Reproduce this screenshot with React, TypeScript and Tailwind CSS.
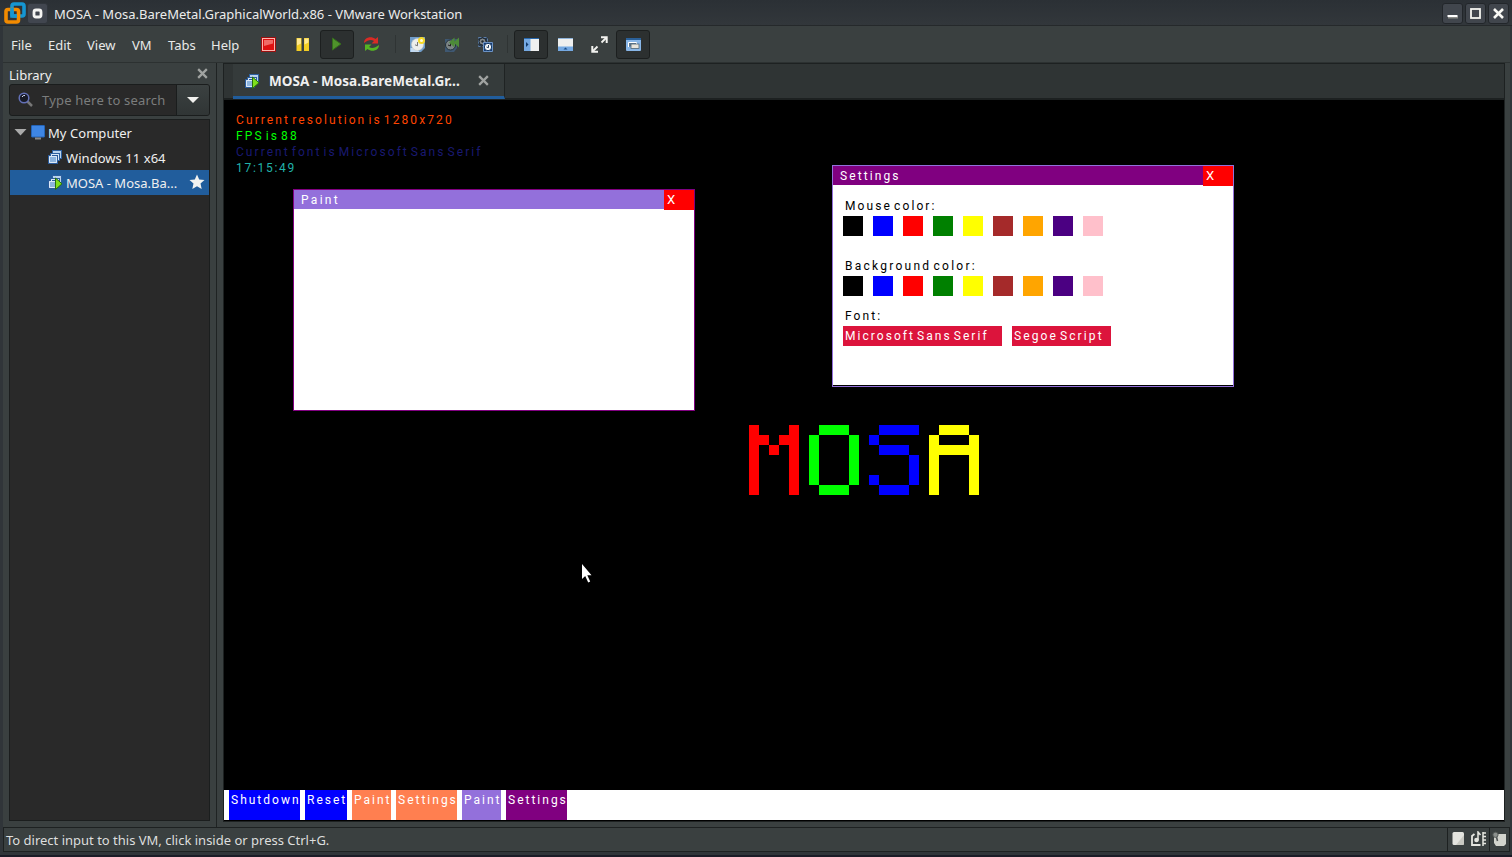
import type { ReactNode } from 'react';

const px = "whitespace-pre font-['Roboto',sans-serif] font-normal text-[12px] leading-[16px]";

const COLORS = [
  'bg-black',
  'bg-[#0000ff]',
  'bg-[#ff0000]',
  'bg-[#008000]',
  'bg-[#ffff00]',
  'bg-[#a52a2a]',
  'bg-[#ffa500]',
  'bg-[#4b0082]',
  'bg-[#ffc0cb]',
];

const TASKS = [
  { label: 'Shutdown', cls: 'w-[71px] mr-[5px] bg-[#0000ff] tracking-[2px]' },
  { label: 'Reset', cls: 'w-[42px] mr-[5px] bg-[#0000ff] tracking-[2px]' },
  { label: 'Paint', cls: 'w-[39px] mr-[5px] bg-[#ff7f50] tracking-[2px]' },
  { label: 'Settings', cls: 'w-[61px] mr-[5px] bg-[#ff7f50] tracking-[2px]' },
  { label: 'Paint', cls: 'w-[39px] mr-[5px] bg-[#9370db] tracking-[2px]' },
  { label: 'Settings', cls: 'w-[61px] bg-[#800080] tracking-[2px]' },
];

const LETTERS = [
  { fill: '#ff0000', rows: ['10001', '11011', '10101', '10001', '10001', '10001', '10001'] },
  { fill: '#00ff00', rows: ['01110', '10001', '10001', '10001', '10001', '10001', '01110'] },
  { fill: '#0000ff', rows: ['01111', '10000', '01110', '00001', '00001', '10001', '01110'] },
  { fill: '#ffff00', rows: ['01110', '10001', '11111', '10001', '10001', '10001', '10001'] },
];

function MachineIcon({ running = false }: { running?: boolean }) {
  return (
    <svg width="15" height="15" viewBox="0 0 15 15" className="shrink-0">
      <rect x="4.500" y=".5" width="9" height="8" fill="#b9d3ee" stroke="#2d5f9e" />
      <rect x="2.500" y="3.500" width="9" height="7" fill="#a3c3e6" stroke="#2d5f9e" />
      <rect x=".5" y="5.500" width="9" height="8" fill="#8db4de" stroke="#2a5b9b" />
      <path d="M3.500 6V4.500h7V10M1.500 12.500v-6h7v6z" stroke="#dce9f7" fill="none" />
      {running && <path d="M7.500 3v11.500L14 8.800z" fill="#7ee01c" stroke="#276c0d" />}
    </svg>
  );
}

function CloseIcon({ size = 12 }: { size?: number }) {
  return (
    <svg width={size} height={size} viewBox="0 0 12 12" className="shrink-0">
      <path d="M2 2l8 8M10 2l-8 8" stroke="#a0a3a1" strokeWidth="2.1" />
    </svg>
  );
}

function ToolButton({ active = false, children }: { active?: boolean; children: ReactNode }) {
  return (
    <div
      className={
        active
          ? 'flex h-[29px] w-[34px] shrink-0 items-center justify-center rounded-[3px] border border-[#1c1f1f] bg-[#2c3030]'
          : 'flex h-[29px] w-[34px] shrink-0 items-center justify-center'
      }
    >
      {children}
    </div>
  );
}

function TitleBar() {
  const button = 'flex h-[21px] w-[21px] items-center justify-center rounded-[3px] border border-[#22262a] bg-[#41464d]';
  return (
    <div className="flex h-[26px] shrink-0 items-center border-b border-[#25292b] bg-gradient-to-b from-[#2b3035] to-[#32373b] pl-[3px] pt-[1px]">
      <svg width="24" height="24" viewBox="0 0 24 24" className="shrink-0">
        <rect x="9" y="3" width="12" height="12" rx="2" fill="none" stroke="#1596d2" strokeWidth="3.6" />
        <rect x="3" y="8.500" width="12.500" height="12.500" rx="2" fill="none" stroke="#f38b00" strokeWidth="3.600" />
        <path d="M9 7v8h5" fill="none" stroke="#1596d2" strokeWidth="3.600" />
      </svg>
      <div className="flex h-[21px] w-[21px] items-center justify-center rounded-[3px] border border-[#30353b] bg-[#41464f]">
        <svg width="11" height="11" viewBox="0 0 11 11">
          <rect x="2" y="2" width="7" height="7" rx="2" fill="none" stroke="#f4f4f2" strokeWidth="2.800" />
        </svg>
      </div>
      <div className="ml-[6px] grow pt-[3px] text-[13px] text-[#ececec]">
        MOSA - Mosa.BareMetal.GraphicalWorld.x86 - VMware Workstation
      </div>
      <div className="flex gap-[2px] pr-[3px]">
        <div className={button}>
          <svg width="13" height="13" viewBox="0 0 13 13">
            <path d="M2 10.500h10" stroke="#8b8c88" strokeWidth="2" />
            <path d="M1.500 9h10" stroke="#fff" strokeWidth="2" />
          </svg>
        </div>
        <div className={button}>
          <svg width="13" height="13" viewBox="0 0 13 13">
            <rect x="2" y="2" width="9" height="9" fill="none" stroke="#f4f4f0" strokeWidth="1.800" />
          </svg>
        </div>
        <div className={button}>
          <svg width="13" height="13" viewBox="0 0 13 13">
            <path d="M2 2l9 9M11 2l-9 9" stroke="#f8f8f4" strokeWidth="2.600" />
          </svg>
        </div>
      </div>
    </div>
  );
}

function MenuBar() {
  const item = 'pt-[4px]';
  return (
    <div className="flex h-[37px] shrink-0 items-center border-b border-[#2c3131] pl-[8px] text-[13px] text-[#e8e9e8]">
      <div className={`${item} w-[37px]`}>File</div>
      <div className={`${item} w-[39px]`}>Edit</div>
      <div className={`${item} w-[45px]`}>View</div>
      <div className={`${item} w-[36px]`}>VM</div>
      <div className={`${item} w-[43px]`}>Tabs</div>
      <div className={`${item} w-[40px]`}>Help</div>
      <ToolButton>
        <svg width="15" height="15" viewBox="0 0 15 15">
          <rect x="1.500" y="1.500" width="12" height="12" fill="#dd1111" stroke="#ffb4ad" />
          <rect x=".5" y=".5" width="14" height="14" fill="none" stroke="#9b1010" />
          <path d="M3 3h9v3.500L3 9z" fill="#f06a66" />
        </svg>
      </ToolButton>
      <ToolButton>
        <svg width="15" height="15" viewBox="0 0 15 15">
          <rect x="1.500" y="1" width="5" height="13" fill="#f4ce23" />
          <rect x="9" y="1" width="5" height="13" fill="#f4ce23" />
          <path d="M2 1.500h4v5l-4 2zM9.500 1.500h4v4l-4 2z" fill="#ffe992" />
        </svg>
      </ToolButton>
      <div className="ml-px flex">
        <ToolButton active>
          <svg width="14" height="16" viewBox="0 0 14 16">
            <path d="M2.500 2v12l8.500-6z" fill="#4f932b" stroke="#356c1d" />
          </svg>
        </ToolButton>
      </div>
      <ToolButton>
        <svg width="17" height="16" viewBox="0 0 17 16">
          <path d="M1 7C1 1.500 8 -.5 12.500 3L15 1v6.500H8.500L11 5C8 3.200 5 4 1 7z" fill="#d92b25" />
          <path d="M16 9C16 14.500 9 16.500 4.500 13L2 15V8.500H8.500L6 11C9 12.800 12 12 16 9z" fill="#55b522" />
        </svg>
      </ToolButton>
      <div className="ml-[7px] h-[18px] w-px bg-[#2f3434]" />
      <div className="ml-[4px] flex">
        <ToolButton>
          <svg width="17" height="17" viewBox="0 0 17 17">
            <path d="M1 1h15v11l-4 4H1z" fill="#6f9cc9" />
            <path d="M1.500 12h6l3 4h-9z" fill="#c2d9f0" />
            <circle cx="8.500" cy="8.500" r="6" fill="#eceeec" stroke="#c6cac6" strokeWidth=".6" />
            <path d="M8.500 6v3.800l-2.500-1" fill="none" stroke="#777" strokeWidth="1" />
            <circle cx="12.500" cy="4.500" r="3.500" fill="#f7d925" />
            <circle cx="12.500" cy="4.500" r="1.500" fill="#fffce0" />
          </svg>
        </ToolButton>
        <ToolButton>
          <svg width="17" height="17" viewBox="0 0 17 17">
            <path d="M2 3h12v9l-3 4H2z" fill="#3f5872" />
            <circle cx="7.500" cy="9" r="5" fill="#7c8484" stroke="#23303a" />
            <path d="M7.500 6.500v3.500L5 9" fill="none" stroke="#222" />
            <path d="M11.500 1.500v10L6 6.500zM16 1.500v10L10.500 6.500z" fill="#4d8b38" />
          </svg>
        </ToolButton>
        <ToolButton>
          <svg width="17" height="17" viewBox="0 0 17 17">
            <path d="M1.500 1.500h9v9h-9z" fill="#25364a" stroke="#5c7ea8" strokeDasharray="3 2" />
            <circle cx="5.500" cy="5.500" r="3.500" fill="#858b8d" stroke="#182431" />
            <circle cx="5.500" cy="5.500" r="1.200" fill="#202a33" />
            <path d="M6.500 6.500h9v9h-9z" fill="#173c72" stroke="#6c93c4" />
            <circle cx="11" cy="11" r="3.700" fill="#f6f7f7" stroke="#123968" />
            <path d="M11.500 9v2.700L9.500 11" fill="none" stroke="#25415f" />
          </svg>
        </ToolButton>
      </div>
      <div className="ml-[5px] h-[18px] w-px bg-[#2f3434]" />
      <div className="ml-[6px] flex">
        <ToolButton active>
          <svg width="17" height="15" viewBox="0 0 17 15">
            <rect x="1" y="1" width="15" height="13" fill="#eff0ef" />
            <rect x="1" y="1" width="6.500" height="13" fill="#75a9e2" />
            <path d="M1 1.500h15" stroke="#2868ad" />
            <path d="M3 5v5L5.500 7.500z" fill="#123b6c" />
          </svg>
        </ToolButton>
        <ToolButton>
          <svg width="17" height="15" viewBox="0 0 17 15">
            <rect x="1" y="1" width="15" height="13" fill="#eff0ef" />
            <rect x="1" y="9.500" width="15" height="4.500" fill="#75a9e2" />
            <path d="M1 1.500h15" stroke="#8fb4da" />
            <path d="M6.500 12.500h4l-2-2z" fill="#174a83" />
          </svg>
        </ToolButton>
        <ToolButton>
          <svg width="17" height="17" viewBox="0 0 17 17">
            <path d="M10.500 6.500L15 2M6.500 10.500L2 15" stroke="#f2f2ef" strokeWidth="1.800" />
            <path d="M10 1.300h5.700V7M7 15.700H1.300V10" fill="none" stroke="#f2f2ef" strokeWidth="2" />
          </svg>
        </ToolButton>
        <ToolButton active>
          <svg width="17" height="15" viewBox="0 0 17 15">
            <rect x="1" y="1" width="15" height="13" rx="1" fill="#88b6e7" />
            <path d="M1 2h15" stroke="#2a6099" strokeWidth="2" />
            <path d="M3.500 10V5.500h8v2" fill="#5d778e" stroke="#fff" />
            <rect x="6" y="7" width="8" height="4.500" fill="#e8e5dc" stroke="#4f6474" strokeWidth=".8" />
          </svg>
        </ToolButton>
      </div>
    </div>
  );
}

function Library() {
  return (
    <div className="flex w-[214px] shrink-0 flex-col border-r border-[#1f2323] pl-[6px] pr-[6px] text-[13px] text-[#efefef]">
      <div className="flex h-[20px] shrink-0 items-center justify-between pt-[5px] text-[13px]">
        <span>Library</span>
        <div className="-mt-[4px] mr-[1px] flex"><CloseIcon size={13} /></div>
      </div>
      <div className="mt-[1px] flex h-[32px] shrink-0 rounded-[3px] border border-[#1a1d1d] bg-[#292929]">
        <div className="flex grow items-center">
          <svg width="17" height="17" viewBox="0 0 17 17" className="-mt-[2px] ml-[7px] shrink-0">
            <path d="M10.500 10.500L15 15" stroke="#777" strokeWidth="2.500" />
            <circle cx="7" cy="7" r="4.800" fill="#171a26" stroke="#6370b7" strokeWidth="1.500" />
            <path d="M5 6q1-2 3-1.500" fill="none" stroke="#d5dcf5" />
          </svg>
          <span className="ml-[8px] whitespace-nowrap pt-[2px] text-[13px] tracking-[0.2px] text-[#7b7d7d]">Type here to search</span>
        </div>
        <div className="flex w-[33px] shrink-0 items-center justify-center rounded-r-[2px] border-l border-[#1a1d1d] bg-gradient-to-b from-[#3b4141] to-[#303535]">
          <svg width="12" height="7" viewBox="0 0 12 7"><path d="M0 0h12L6 6z" fill="#f1f1ee" /></svg>
        </div>
      </div>
      <div className="mb-[6px] mt-[3px] flex grow flex-col border border-[#1b1e1e] bg-[#292929]">
        <div className="flex h-[25px] items-center pl-[4px]">
          <svg width="13" height="7" viewBox="0 0 13 7"><path d="M.5 0h12l-6 6.500z" fill="#aaa" /></svg>
          <svg width="15" height="15" viewBox="0 0 15 15" className="ml-[4px]">
            <rect x=".5" y=".5" width="13" height="11.500" rx=".5" fill="#3e86e4" stroke="#2464b8" />
            <path d="M4 13.500h6" stroke="#888" strokeWidth="2" />
          </svg>
          <span className="ml-[2px] pt-[2px] tracking-[0.05px]">My Computer</span>
        </div>
        <div className="flex h-[25px] items-center pl-[38px]">
          <MachineIcon />
          <span className="ml-[3px] pt-[2px] tracking-[0.05px]">Windows 11 x64</span>
        </div>
        <div className="flex h-[25px] items-center bg-[#215d9c] pl-[38px]">
          <MachineIcon running />
          <span className="ml-[3px] grow whitespace-nowrap pt-[2px]">MOSA - Mosa.Ba...</span>
          <svg width="16" height="16" viewBox="0 0 16 16" className="-mt-[2px] mr-[4px]">
            <path d="M8 .5l2.200 5 5.300.5-4 3.600 1.200 5.400L8 12.200 3.300 15l1.200-5.400L.5 6l5.300-.5z" fill="#f2f2f0" />
          </svg>
        </div>
      </div>
    </div>
  );
}

function WindowBar({ title, color, spacing }: { title: string; color: string; spacing: string }) {
  return (
    <div className="flex h-[20px] shrink-0 items-start">
      <div className={`${px} ${color} ${spacing} h-[19px] grow pl-[7px] pt-[2px] text-white`}>{title}</div>
      <div className="h-[20px] w-[30px] bg-[#ff0000] pl-[3px] pt-[2px] font-['Roboto',sans-serif] text-[13px] leading-[16px] text-white">X</div>
    </div>
  );
}

function Swatches() {
  return (
    <div className="flex gap-[10px]">
      {COLORS.map((c) => (
        <div key={c} className={`h-[20px] w-[20px] ${c}`} />
      ))}
    </div>
  );
}

function Desktop() {
  return (
    <div className="relative flex h-[720px] w-[1280px] shrink-0 flex-col bg-black">
      <div className={`${px} flex grow flex-col pl-[12px] pt-[12px]`}>
        <div className="text-[#ff4500] tracking-[2.1px] [word-spacing:-3px]">Current resolution is 1280x720</div>
        <div className="text-[#00ff00] tracking-[2.1px] [word-spacing:-3px]">FPS is 88</div>
        <div className="text-[#191970] tracking-[2.05px] [word-spacing:-3px]">Current font is Microsoft Sans Serif</div>
        <div className="text-[#20b2aa] tracking-[1.7px]">17:15:49</div>
      </div>

      <div className="absolute left-[69px] top-[89px] flex h-[222px] w-[402px] flex-col border border-[#800080] bg-white">
        <WindowBar title="Paint" color="bg-[#9370db]" spacing="tracking-[2.3px]" />
      </div>

      <div className="absolute left-[608px] top-[65px] flex h-[222px] w-[402px] flex-col border border-[#9370db] bg-black">
        <div className="flex h-[219px] flex-col bg-white">
          <WindowBar title="Settings" color="bg-[#800080]" spacing="tracking-[2.1px]" />
          <div className="flex flex-col pl-[10px] pt-[12px] text-black">
            <div className={`${px} pl-[2px] tracking-[2.1px] [word-spacing:-3px]`}>Mouse color:</div>
            <div className="mt-[2px]"><Swatches /></div>
            <div className={`${px} mt-[22px] pl-[2px] tracking-[2.25px] [word-spacing:-3px]`}>Background color:</div>
            <div className="mt-[2px]"><Swatches /></div>
            <div className={`${px} mt-[12px] pl-[2px] tracking-[2.1px]`}>Font:</div>
            <div className="mt-[2px] flex gap-[10px] text-white">
              <div className={`${px} h-[20px] w-[159px] bg-[#dc143c] pl-[2px] pt-[2px] tracking-[2.05px] [word-spacing:-3px]`}>Microsoft Sans Serif</div>
              <div className={`${px} h-[20px] w-[99px] bg-[#dc143c] pl-[2px] pt-[2px] tracking-[2.1px] [word-spacing:-3px]`}>Segoe Script</div>
            </div>
          </div>
        </div>
      </div>

      <svg width="230" height="70" viewBox="0 0 230 70" shapeRendering="crispEdges" className="absolute left-[525px] top-[325px]">
        {LETTERS.map((l, i) =>
          l.rows.map((row, y) =>
            row.split('').map((c, x) =>
              c === '1' ? <rect key={`${i}-${y}-${x}`} x={i * 60 + x * 10} y={y * 10} width="10" height="10" fill={l.fill} /> : null,
            ),
          ),
        )}
      </svg>

      <svg width="12" height="20" viewBox="0 0 12 20" className="absolute left-[357px] top-[463px]">
        <path d="M1 1v15l3.200-3 3 6.500 2-.9-2.900-6.300H10.500z" fill="#fff" />
      </svg>

      <div className="flex h-[30px] shrink-0 bg-white pl-[5px]">
        {TASKS.map((t, i) => (
          <div key={i} className={`${px} h-[30px] shrink-0 pl-[2px] pt-[2px] text-white ${t.cls}`}>{t.label}</div>
        ))}
      </div>
    </div>
  );
}

function StatusBar() {
  return (
    <div className="flex h-[25px] shrink-0 border border-[#1d2121] text-[13px] text-[#dddedd]">
      <div className="flex grow items-center pl-[2px] pt-[2px]">To direct input to this VM, click inside or press Ctrl+G.</div>
      <div className="flex w-[42px] items-center gap-[5px] border-l border-[#1d2121] pb-[2px] pl-[4px]">
        <svg width="13" height="15" viewBox="0 0 13 15" className="shrink-0">
          <rect x=".5" y="1" width="11.500" height="13" rx="1.500" fill="#e4e4df" />
          <path d="M12 4v9l-1 1H4z" fill="#c9c9c2" />
        </svg>
        <svg width="17" height="16" viewBox="0 0 17 16" className="shrink-0">
          <path d="M4.500 3L2 5v9h8.500" fill="none" stroke="#e6e6e0" strokeWidth="1.800" />
          <circle cx="6.500" cy="9" r="2.300" fill="#e6e6e0" />
          <path d="M8 9.500V1l2.500 3M13 1v14M13 2h3M13 5.500h3M13 9h3M13 12.500h3" fill="none" stroke="#e6e6e0" strokeWidth="1.500" />
        </svg>
      </div>
      <div className="flex w-[20px] items-center border-l border-[#1d2121] pb-[1px] pl-[2px]">
        <svg width="15" height="16" viewBox="0 0 15 16" className="shrink-0">
          <path d="M2 3h12v10l-2 2H4l-2-3z" fill="#d2d4cd" />
          <path d="M4.500 6l1 4" stroke="#4c5050" strokeWidth="1.600" />
          <circle cx="3.500" cy="3.800" r="2.600" fill="#8b908d" stroke="#555b58" />
        </svg>
      </div>
    </div>
  );
}

export default function App() {
  return (
    <div className="flex h-[857px] w-[1512px] flex-col overflow-hidden bg-[#3a4040] font-['Noto_Sans',sans-serif]">
      <TitleBar />
      <div className="flex h-[829px] shrink-0 flex-col border-l-[3px] border-r-[2px] border-[#303539]">
        <MenuBar />
        <div className="flex h-[764px] shrink-0">
          <Library />
          <div className="ml-[6px] flex h-[759px] w-[1282px] shrink-0 flex-col border border-[#1d2121] bg-black">
            <div className="flex h-[36px] shrink-0 border-b-2 border-[#1d2121] bg-[#2f3434]">
              <div className="-mb-[1px] ml-[9px] flex h-[35px] w-[272px] items-center border-b-[3px] border-r border-b-[#215d9c] border-r-[#1f2323] bg-[#353b3b] pl-[12px]">
                <div className="mt-[2px] flex"><MachineIcon running /></div>
                <span className="ml-[9px] w-[208px] whitespace-nowrap pt-[3px] text-[13.5px] font-bold tracking-[0.06px] text-[#efefef]">MOSA - Mosa.BareMetal.Gr...</span>
                <CloseIcon size={13} />
              </div>
            </div>
            <Desktop />
          </div>
        </div>
        <StatusBar />
        <div className="h-[3px] bg-[#303539]" />
      </div>
      <div className="h-[2px] bg-[#1a1b26]" />
    </div>
  );
}
